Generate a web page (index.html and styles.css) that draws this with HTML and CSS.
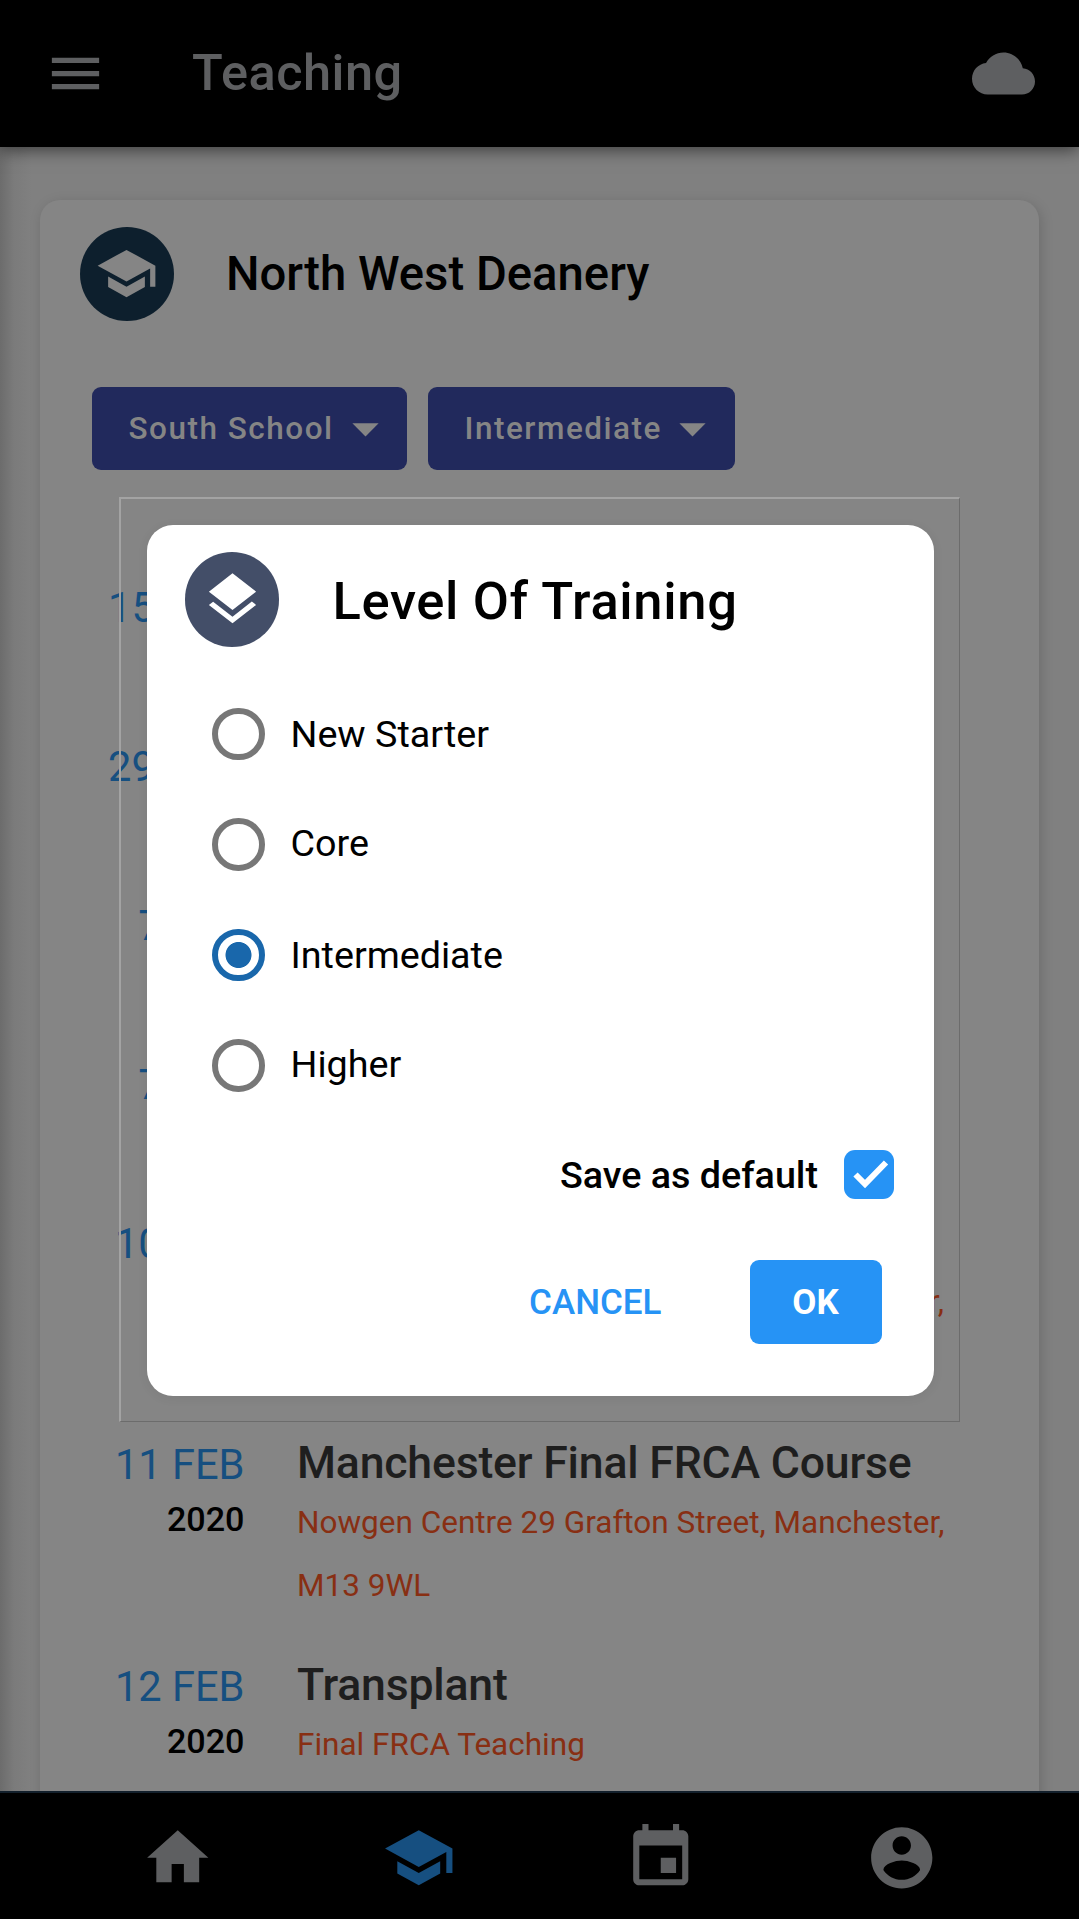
FILE: index.html
```html
<!DOCTYPE html>
<html lang="en">
<head>
<meta charset="utf-8">
<title>Teaching</title>
<link rel="stylesheet" href="styles.css">
</head>
<body>
<div class="app">
  <header class="topbar">
    <svg class="icon" viewBox="0 0 24 24"><path d="M3 18h18v-2H3v2zm0-5h18v-2H3v2zm0-7v2h18V6H3z"/></svg>
    <h1 class="topbar-title">Teaching</h1>
    <svg class="icon" viewBox="0 0 24 24"><path d="M19.35 10.04C18.67 6.59 15.64 4 12 4 9.11 4 6.6 5.64 5.35 8.04 2.34 8.36 0 10.91 0 14c0 3.31 2.69 6 6 6h13c2.76 0 5-2.24 5-5 0-2.64-2.05-4.78-4.65-4.96z"/></svg>
  </header>

  <main class="content">
    <section class="card">
      <div class="card-head">
        <span class="badge"><svg class="icon" viewBox="0 0 24 24"><path d="M5 13.18v4L12 21l7-3.82v-4L12 17l-7-3.82zM12 3L1 9l11 6 9-4.91V17h2V9L12 3z"/></svg></span>
        <h2 class="card-title">North West Deanery</h2>
      </div>
      <div class="filters">
        <button class="filter school"><span>South School</span><svg class="icon" viewBox="0 0 24 24"><path d="M7 10l5 5 5-5z"/></svg></button>
        <button class="filter level"><span>Intermediate</span><svg class="icon" viewBox="0 0 24 24"><path d="M7 10l5 5 5-5z"/></svg></button>
      </div>
      <div class="events">
        <div class="event"><div class="when"><div class="day">15 JAN</div></div></div>
        <div class="event"><div class="when"><div class="day">29 JAN</div></div></div>
        <div class="event"><div class="when"><div class="day">7 FEB</div></div></div>
        <div class="event"><div class="when"><div class="day">7 FEB</div></div></div>
        <div class="event tall">
          <div class="when"><div class="day">10 FEB</div></div>
          <div class="what"><p class="place tail">r,</p></div>
        </div>
        <div class="event">
          <div class="when"><div class="day">11 FEB</div><div class="year">2020</div></div>
          <div class="what"><h3 class="name">Manchester Final FRCA Course</h3><p class="place">Nowgen Centre 29 Grafton Street, Manchester,<br>M13 9WL</p></div>
        </div>
        <div class="event">
          <div class="when"><div class="day">12 FEB</div><div class="year">2020</div></div>
          <div class="what"><h3 class="name">Transplant</h3><p class="place">Final FRCA Teaching</p></div>
        </div>
      </div>
    </section>
  </main>

  <nav class="tabs">
    <svg class="tab" viewBox="0 0 24 24"><path d="M10 20v-6h4v6h5v-8h3L12 3 2 12h3v8z"/></svg>
    <svg class="tab active" viewBox="0 0 24 24"><path d="M5 13.18v4L12 21l7-3.82v-4L12 17l-7-3.82zM12 3L1 9l11 6 9-4.91V17h2V9L12 3z"/></svg>
    <svg class="tab" viewBox="0 0 24 24"><path d="M17 12h-5v5h5v-5zM16 1v2H8V1H6v2H5c-1.11 0-1.99.9-1.99 2L3 19c0 1.1.89 2 2 2h14c1.1 0 2-.9 2-2V5c0-1.1-.9-2-2-2h-1V1h-2zm3 18H5V8h14v11z"/></svg>
    <svg class="tab" viewBox="0 0 24 24"><path d="M12 2C6.48 2 2 6.48 2 12s4.480 10 10 10 10-4.480 10-10S17.520 2 12 2zm0 3c1.660 0 3 1.340 3 3s-1.340 3-3 3-3-1.340-3-3 1.340-3 3-3zm0 14.200c-2.500 0-4.710-1.280-6-3.220.030-1.990 4-3.080 6-3.080 1.990 0 5.970 1.090 6 3.080-1.290 1.940-3.500 3.220-6 3.220z"/></svg>
  </nav>
</div>

<div class="overlay">
  <div class="frame">
    <div class="dialog">
      <div class="dialog-head">
        <span class="badge"><svg class="icon" viewBox="0 0 24 24"><path d="M11.990 18.540l-7.370-5.730L3 14.070l9 7 9-7-1.630-1.270-7.380 5.740zM12 16l7.360-5.730L21 9l-9-7-9 7 1.630 1.270L12 16z"/></svg></span>
        <h2 class="dialog-title">Level Of Training</h2>
      </div>
      <div class="options">
        <label class="option"><span class="radio"></span><span>New Starter</span></label>
        <label class="option raised"><span class="radio"></span><span>Core</span></label>
        <label class="option"><span class="radio checked"></span><span>Intermediate</span></label>
        <label class="option raised"><span class="radio"></span><span>Higher</span></label>
      </div>
      <label class="save"><span>Save as default</span>
        <span class="checkbox"><svg viewBox="0 0 50 49"><path d="M11.500 24.500l9.500 9.500L42 12.500" fill="none" stroke="#fff" stroke-width="6"/></svg></span>
      </label>
      <div class="actions">
        <button class="cancel">CANCEL</button>
        <button class="ok">OK</button>
      </div>
    </div>
  </div>
</div>
</body>
</html>
```
FILE: styles.css
```css
* { box-sizing: border-box; }
body { margin: 0; font-family: Roboto, "Liberation Sans", sans-serif; color: #000; }
h1, h2, h3, p { margin: 0; font-weight: 500; }
button { border: 0; padding: 0; margin: 0; background: none; font: inherit; color: inherit; }
.icon { width: 63px; height: 63px; flex: none; fill: currentColor; display: block; }

.app { width: 1079px; height: 1919px; display: flex; flex-direction: column; overflow: hidden; background: #808080; }

.topbar { position: relative; z-index: 1; height: 147px; flex: none; display: flex; align-items: center; padding: 0 44px; background: #000; color: #5e5f61; box-shadow: 0 3px 16px rgba(0, 0, 0, .55); }
.topbar-title { flex: 1; margin: -2px 0 0 85px; font-size: 50.5px; line-height: 63px; letter-spacing: .5px; }

.content { flex: 1; min-height: 0; overflow: hidden; padding: 52.5px 40px 0; background: linear-gradient(90deg, #6c6c6c 0, #7b7b7b 14px, #808080 32px); }
.card { height: 1700px; border-radius: 20px; background: #858585; box-shadow: 2px 3px 13px rgba(0, 0, 0, .16); padding: 27px 40px 0; }
.card-head { display: flex; align-items: center; height: 94.5px; }
.badge { width: 94.5px; height: 94.5px; flex: none; border-radius: 50%; display: flex; align-items: center; justify-content: center; background: #0d1f2d; color: #858585; }
.card-head .badge { margin-left: -.5px; padding-right: 1px; }
.card-title { margin: 1px 0 0 52px; font-size: 47.25px; line-height: 60px; }

.filters { display: flex; gap: 21px; margin: 65.500px 0 0 12px; }
.filter { height: 83.500px; border-radius: 9px; display: flex; align-items: center; justify-content: space-between; background: #21295c; color: #858585; font-size: 31.5px; font-weight: 500; letter-spacing: 1.5px; padding: 0 11px 0 36.5px; white-space: nowrap; }
.school { width: 315px; padding-right: 10px; }
.level { width: 307px; }
.filter .icon { margin-left: -4px; }

.events { margin-top: 108px; }
.event { display: grid; grid-template-columns: 164.5px 1fr; column-gap: 52.5px; min-height: 158.9px; padding-bottom: 39.5px; }
.event.tall { min-height: 221.7px; }
.when { text-align: right; }
.day { font-size: 41.6px; line-height: 60px; color: #164f80; }
.year { font-size: 34.125px; line-height: 48px; font-weight: 500; }
.name { font-size: 44.625px; line-height: 56px; letter-spacing: -.2px; color: #1e1e1e; white-space: nowrap; }
.place { font-size: 31.5px; line-height: 63px; font-weight: 400; color: #882f13; white-space: nowrap; }
.place.tail { margin-top: 56px; padding-right: 55px; text-align: right; }

.tabs { position: relative; height: 128px; flex: none; display: flex; justify-content: space-between; align-items: flex-start; padding: 28px 140px 0 140.5px; border-top: 2px solid #13202c; background: #000; color: #5e5f61; }
.tab { width: 73.5px; height: 73.5px; fill: currentColor; }
.tab.active { color: #164f80; }

.overlay { position: absolute; inset: 0; display: flex; align-items: center; justify-content: center; }
.frame { width: 841px; height: 925px; padding: 26px; border: 2px solid; border-width: 2px 1px 1px 2px; border-color: #a3a3a3 #6c6c6c #6c6c6c #a3a3a3; }
.dialog { height: 871px; width: 787px; border-radius: 26px; background: #fff; padding: 27px 40px 0 37.5px; box-shadow: 0 2px 12px rgba(0, 0, 0, .06); }
.dialog-head { display: flex; align-items: center; height: 95px; }
.dialog-head .badge { background: #434e68; color: #fff; padding-left: 2px; }
.dialog-title { margin: 2px 0 0 53.5px; font-size: 52.5px; line-height: 66px; letter-spacing: .65px; }

.options { margin: 31.500px 0 0 27.500px; }
.option { display: flex; align-items: center; gap: 26px; height: 110.5px; font-size: 37.7px; }
.option.raised > :last-child { padding-bottom: 3px; }
.radio { width: 52.5px; height: 52.5px; border: 6px solid #777; border-radius: 50%; }
.radio.checked { border-color: #1967ab; background: radial-gradient(circle, #1967ab 12.6px, #fff 13.4px); }

.save { display: flex; justify-content: flex-end; align-items: center; gap: 26px; height: 50px; margin-top: 29px; font-size: 37.7px; font-weight: 500; }
.checkbox { width: 50px; height: 49px; border-radius: 11px; background: #2693f5; }
.checkbox svg { display: block; width: 50px; height: 49px; }

.actions { display: flex; justify-content: flex-end; align-items: center; gap: 88px; margin: 60.500px 12.500px 0 0; font-size: 35px; font-weight: 500; }
.cancel { color: #2693f5; padding-top: 2px; }
.ok { width: 132px; height: 83.500px; padding-top: 2px; border-radius: 9px; background: #2693f5; color: #fff; font-weight: 700; }
```
